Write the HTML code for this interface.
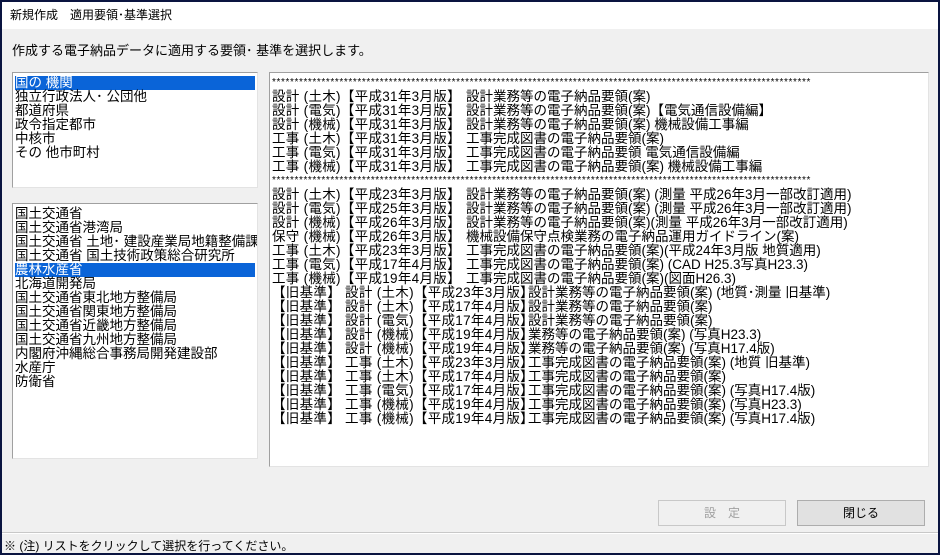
<!DOCTYPE html>
<html><head><meta charset="utf-8"><style>
*{margin:0;padding:0;box-sizing:border-box}
body{width:940px;height:555px;background:#0a1440;font-family:"Liberation Sans","Noto Sans CJK JP",sans-serif;overflow:hidden;position:relative}
.win{position:absolute;left:2px;top:2px;width:936px;height:551px;background:#f0f0f0}
.title{position:absolute;left:0;top:0;width:936px;height:27px;background:#fff;font-size:12px;line-height:27px;padding-left:8px;color:#000}
.t{position:absolute;white-space:nowrap;font-size:13px;color:#000}
.box{position:absolute;background:#fff;border:1px solid #a0a0a0;border-right-color:#e3e3e3;border-bottom-color:#e3e3e3;overflow:hidden;font-size:13.5px;line-height:14px;white-space:nowrap;padding:3px 2px}
.box div{height:14px}
.sel{background:#0a64d8;color:#fff}
.btn{position:absolute;height:26px;width:128px;border:1px solid #adadad;background:#e1e1e1;font-size:12px;text-align:center;line-height:24px}
.r span{display:inline-block;letter-spacing:0.3px}
.a{width:194px}
.r span.k{width:256px;letter-spacing:0.3px}
.st{font-size:10px;letter-spacing:0.6px}
</style></head><body><div class="win">
<div class="title">新規作成　適用要領･基準選択</div>
<div class="t" style="left:10px;top:38px">作成する電子納品データに適用する要領･ 基準を選択します。</div>
<div class="box" style="left:10px;top:70px;width:246px;height:116px">
<div class="sel">国の 機関</div><div>独立行政法人･ 公団他</div><div>都道府県</div><div>政令指定都市</div><div>中核市</div><div>その 他市町村</div></div>
<div class="box" style="left:10px;top:201px;width:246px;height:256px">
<div>国土交通省</div><div>国土交通省港湾局</div><div>国土交通省 土地･ 建設産業局地籍整備課</div><div>国土交通省 国土技術政策総合研究所</div><div class="sel">農林水産省</div><div>北海道開発局</div><div>国土交通省東北地方整備局</div><div>国土交通省関東地方整備局</div><div>国土交通省近畿地方整備局</div><div>国土交通省九州地方整備局</div><div>内閣府沖縄総合事務局開発建設部</div><div>水産庁</div><div>防衛省</div></div>
<div class="box r" style="left:267px;top:70px;width:660px;height:395px">
<div class="st">************************************************************************************************************************</div>
<div><span class="a">設計 (土木)【平成31年3月版】</span>設計業務等の電子納品要領(案)</div>
<div><span class="a">設計 (電気)【平成31年3月版】</span>設計業務等の電子納品要領(案)【電気通信設備編】</div>
<div><span class="a">設計 (機械)【平成31年3月版】</span>設計業務等の電子納品要領(案) 機械設備工事編</div>
<div><span class="a">工事 (土木)【平成31年3月版】</span>工事完成図書の電子納品要領(案)</div>
<div><span class="a">工事 (電気)【平成31年3月版】</span>工事完成図書の電子納品要領 電気通信設備編</div>
<div><span class="a">工事 (機械)【平成31年3月版】</span>工事完成図書の電子納品要領(案) 機械設備工事編</div>
<div class="st">************************************************************************************************************************</div>
<div><span class="a">設計 (土木)【平成23年3月版】</span>設計業務等の電子納品要領(案) (測量 平成26年3月一部改訂適用)</div>
<div><span class="a">設計 (電気)【平成25年3月版】</span>設計業務等の電子納品要領(案) (測量 平成26年3月一部改訂適用)</div>
<div><span class="a">設計 (機械)【平成26年3月版】</span>設計業務等の電子納品要領(案)(測量 平成26年3月一部改訂適用)</div>
<div><span class="a">保守 (機械)【平成26年3月版】</span>機械設備保守点検業務の電子納品運用ガイドライン(案)</div>
<div><span class="a">工事 (土木)【平成23年3月版】</span>工事完成図書の電子納品要領(案)(平成24年3月版 地質適用)</div>
<div><span class="a">工事 (電気)【平成17年4月版】</span>工事完成図書の電子納品要領(案) (CAD H25.3写真H23.3)</div>
<div><span class="a">工事 (機械)【平成19年4月版】</span>工事完成図書の電子納品要領(案)(図面H26.3)</div>
<div><span class="k">【旧基準】 設計 (土木)【平成23年3月版】</span>設計業務等の電子納品要領(案) (地質･測量 旧基準)</div>
<div><span class="k">【旧基準】 設計 (土木)【平成17年4月版】</span>設計業務等の電子納品要領(案)</div>
<div><span class="k">【旧基準】 設計 (電気)【平成17年4月版】</span>設計業務等の電子納品要領(案)</div>
<div><span class="k">【旧基準】 設計 (機械)【平成19年4月版】</span>業務等の電子納品要領(案) (写真H23.3)</div>
<div><span class="k">【旧基準】 設計 (機械)【平成19年4月版】</span>業務等の電子納品要領(案) (写真H17.4版)</div>
<div><span class="k">【旧基準】 工事 (土木)【平成23年3月版】</span>工事完成図書の電子納品要領(案) (地質 旧基準)</div>
<div><span class="k">【旧基準】 工事 (土木)【平成17年4月版】</span>工事完成図書の電子納品要領(案)</div>
<div><span class="k">【旧基準】 工事 (電気)【平成17年4月版】</span>工事完成図書の電子納品要領(案) (写真H17.4版)</div>
<div><span class="k">【旧基準】 工事 (機械)【平成19年4月版】</span>工事完成図書の電子納品要領(案) (写真H23.3)</div>
<div><span class="k">【旧基準】 工事 (機械)【平成19年4月版】</span>工事完成図書の電子納品要領(案) (写真H17.4版)</div>
</div>
<div class="btn" style="left:656px;top:498px;color:#a0a0a0;background:#f0f0f0;border-color:#c8c8c8">設　定</div>
<div class="btn" style="left:795px;top:498px">閉じる</div>
<div style="position:absolute;left:0;top:530px;width:936px;height:2px;border-top:1px solid #c8c8c8;border-bottom:1px solid #fff"></div>
<div class="t" style="left:2px;top:535px;font-size:12px">※ (注) リストをクリックして選択を行ってください。</div>
</div></body></html>
